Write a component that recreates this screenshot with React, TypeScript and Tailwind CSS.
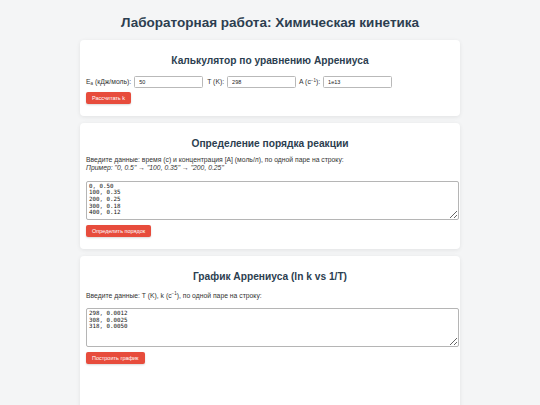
import { useState } from 'react';

const btn =
  'block rounded-[2px] bg-[#e74c3c] px-[6px] h-[12px] text-[5.5px] leading-[12px] text-white shadow-[0_1px_2px_rgba(0,0,0,0.15)]';
const field =
  'h-[12px] w-[69px] rounded-[1.5px] border border-[#b9b9b9] bg-white px-[4px] text-[5.5px] text-[#222] outline-none';
const area =
  "block w-[373px] h-[39px] resize-y rounded-[2px] border border-[#b5b5b5] bg-white px-[2px] py-[1px] font-['DejaVu_Sans_Mono',monospace] text-[5.8px] leading-[6.7px] text-[#111] outline-none";

function Card({ title, children, className = '' }: { title: string; children: React.ReactNode; className?: string }) {
  return (
    <section className={`rounded-[4px] bg-white px-[6px] pt-[14px] shadow-[0_1px_4px_rgba(0,0,0,0.08)] ${className}`}>
      <h2 className="text-center text-[10.2px] font-bold leading-[13px] text-[#2c3e50]">{title}</h2>
      {children}
    </section>
  );
}

export default function App() {
  const [ea, setEa] = useState('50');
  const [temp, setTemp] = useState('298');
  const [pre, setPre] = useState('1e13');
  const [orderData, setOrderData] = useState('0, 0.50\n100, 0.35\n200, 0.25\n300, 0.18\n400, 0.12');
  const [plotData, setPlotData] = useState('298, 0.0012\n308, 0.0025\n318, 0.0050');

  return (
    <div className="min-h-screen bg-[#f4f5f6] pt-[14px] font-['Liberation_Sans',Arial,sans-serif] text-[#333]">
      <h1 className="text-center text-[13.5px] font-bold leading-[17px] text-[#2c3e50]">
        Лабораторная работа: Химическая кинетика
      </h1>

      <div className="mx-auto mt-[9px] flex w-[380px] flex-col gap-[7px]">
        {/* Arrhenius calculator */}
        <Card title="Калькулятор по уравнению Аррениуса" className="pb-[12px]">
          <div className="mt-[9px] flex h-[12px] items-center text-[6.8px] leading-[12px]">
            <span>
              E<sub className="text-[4.5px]">a</sub> (кДж/моль):
            </span>
            <input className={`${field} ml-[3px]`} value={ea} onChange={(e) => setEa(e.target.value)} />
            <span className="ml-[4px]">T (K):</span>
            <input className={`${field} ml-[3px]`} value={temp} onChange={(e) => setTemp(e.target.value)} />
            <span className="ml-[3px]">
              A (c<sup className="text-[4.5px]">−1</sup>):
            </span>
            <input className={`${field} ml-[3px]`} value={pre} onChange={(e) => setPre(e.target.value)} />
          </div>
          <button className={`${btn} mt-[4px]`}>Рассчитать k</button>
        </Card>

        {/* Reaction order */}
        <Card title="Определение порядка реакции" className="pb-[12px]">
          <p className="mt-[6px] text-[6.8px] leading-[8.3px]">
            Введите данные: время (с) и концентрация [A] (моль/л), по одной паре на строку:
            <br />
            <i>Пример: "0, 0.5" → "100, 0.35" → "200, 0.25"</i>
          </p>
          <textarea
            className={`${area} mt-[8px]`}
            value={orderData}
            onChange={(e) => setOrderData(e.target.value)}
          />
          <button className={`${btn} mt-[5px]`}>Определить порядок</button>
        </Card>

        {/* Arrhenius plot */}
        <Card title="График Аррениуса (ln k vs 1/T)" className="pb-[60px]">
          <p className="mt-[9px] text-[6.8px] leading-[8.3px]">
            Введите данные: T (K), k (c<sup className="text-[4.5px]">−1</sup>), по одной паре на строку:
          </p>
          <textarea
            className={`${area} mt-[8px]`}
            value={plotData}
            onChange={(e) => setPlotData(e.target.value)}
          />
          <button className={`${btn} mt-[5px]`}>Построить график</button>
        </Card>
      </div>
    </div>
  );
}
